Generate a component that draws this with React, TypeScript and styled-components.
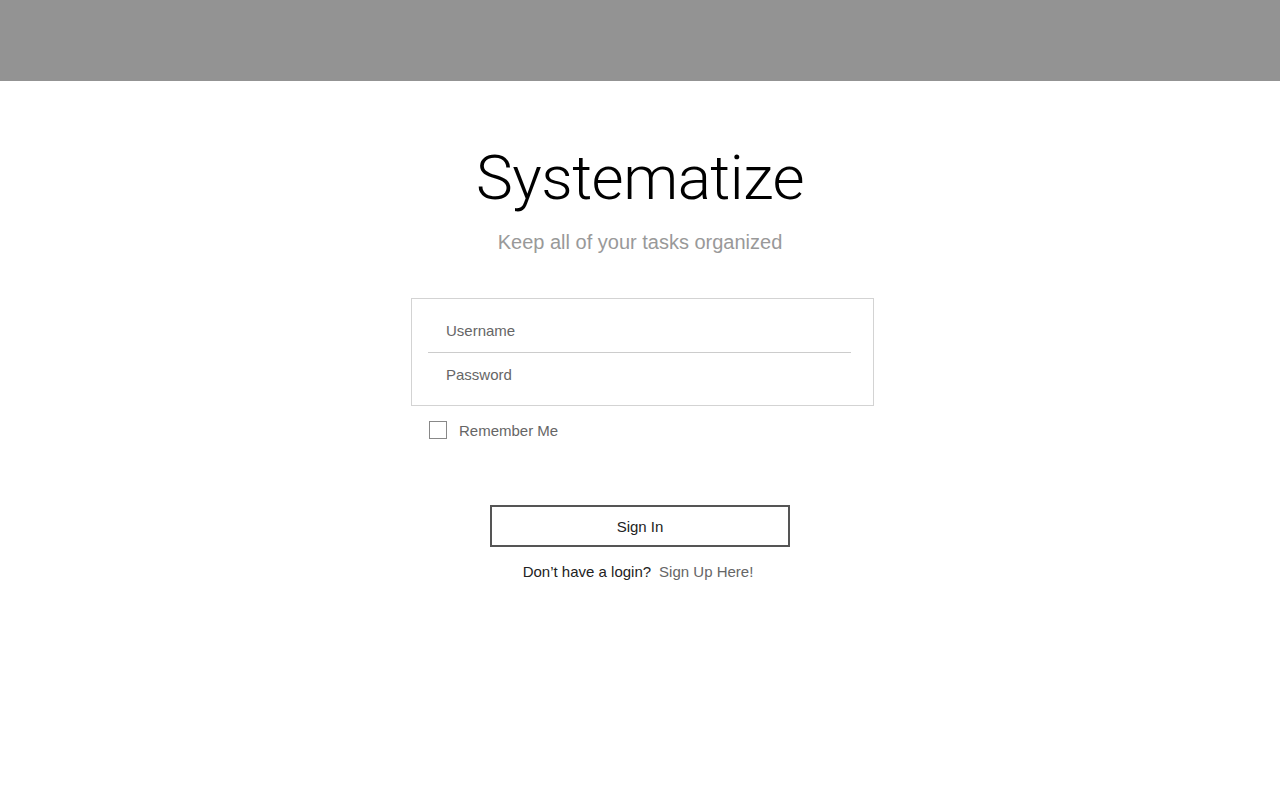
import React, { useState } from "react";
import styled, { createGlobalStyle } from "styled-components";

const GlobalStyle = createGlobalStyle`
  html, body {
    margin: 0;
    padding: 0;
    background: #ffffff;
    font-family: "Liberation Sans", Arial, sans-serif;
  }
`;

const App = () => {
  const [remember, setRemember] = useState(false);

  return (
    <Root>
      <GlobalStyle />
      <TopBar />
      <Main>
        <Title>Systematize</Title>
        <Tagline>Keep all of your tasks organized</Tagline>
        <FormBox>
          <Field placeholder="Username" />
          <Divider />
          <Field placeholder="Password" type="password" />
        </FormBox>
        <RememberRow onClick={() => setRemember(!remember)}>
          <CheckBox $checked={remember} />
          <RememberLabel>Remember Me</RememberLabel>
        </RememberRow>
        <SignInButton>Sign In</SignInButton>
        <SignUpLine>
          Don’t have a login?
          <SignUpLink href="#">Sign Up Here!</SignUpLink>
        </SignUpLine>
      </Main>
    </Root>
  );
};

export default App;

const Root = styled.div({
  width: "100vw",
  minHeight: "100vh",
  display: "flex",
  flexDirection: "column",
});

const TopBar = styled.header({
  height: 81,
  background: "#939393",
  flexShrink: 0,
});

const Main = styled.main({
  display: "flex",
  flexDirection: "column",
  alignItems: "center",
  paddingTop: 57,
});

const Title = styled.h1({
  margin: 0,
  fontSize: 62,
  fontWeight: 300,
  lineHeight: "80px",
  color: "#000",
  letterSpacing: -0.5,
  fontFamily: "Roboto, 'Liberation Sans', sans-serif",
});

const Tagline = styled.p({
  margin: "12px 0 0",
  fontSize: 20,
  lineHeight: "24px",
  color: "#999999",
});

const FormBox = styled.div({
  marginTop: 44,
  marginLeft: 5,
  width: 463,
  height: 108,
  boxSizing: "border-box",
  border: "1px solid #d3d3d3",
  padding: "10px 22px 0 16px",
  display: "flex",
  flexDirection: "column",
});

const Field = styled.input({
  border: "none",
  outline: "none",
  height: 43,
  padding: "0 0 0 18px",
  fontSize: 15,
  fontFamily: "'Liberation Sans', Arial, sans-serif",
  color: "#555",
  background: "transparent",
  "&::placeholder": {
    color: "#666",
  },
});

const Divider = styled.div({
  height: 1,
  background: "#cccccc",
});

const RememberRow = styled.label({
  alignSelf: "center",
  width: 463,
  marginLeft: 5,
  boxSizing: "border-box",
  marginTop: 15,
  paddingLeft: 18,
  display: "flex",
  alignItems: "center",
  gap: 12,
  cursor: "pointer",
});

const CheckBox = styled.span<{ $checked: boolean }>(({ $checked }) => ({
  width: 18,
  height: 18,
  boxSizing: "border-box",
  border: "1px solid #888",
  background: $checked ? "#555" : "#fff",
}));

const RememberLabel = styled.span({
  fontSize: 15,
  color: "#666",
});

const SignInButton = styled.button({
  marginTop: 66,
  width: 300,
  height: 42,
  border: "2px solid #555",
  background: "#fff",
  fontSize: 15,
  fontFamily: "'Liberation Sans', Arial, sans-serif",
  color: "#222",
  cursor: "pointer",
});

const SignUpLine = styled.div({
  marginTop: 16,
  marginRight: 4,
  fontSize: 15,
  color: "#222",
  display: "flex",
  gap: 8,
});

const SignUpLink = styled.a({
  color: "#666",
  textDecoration: "none",
});
